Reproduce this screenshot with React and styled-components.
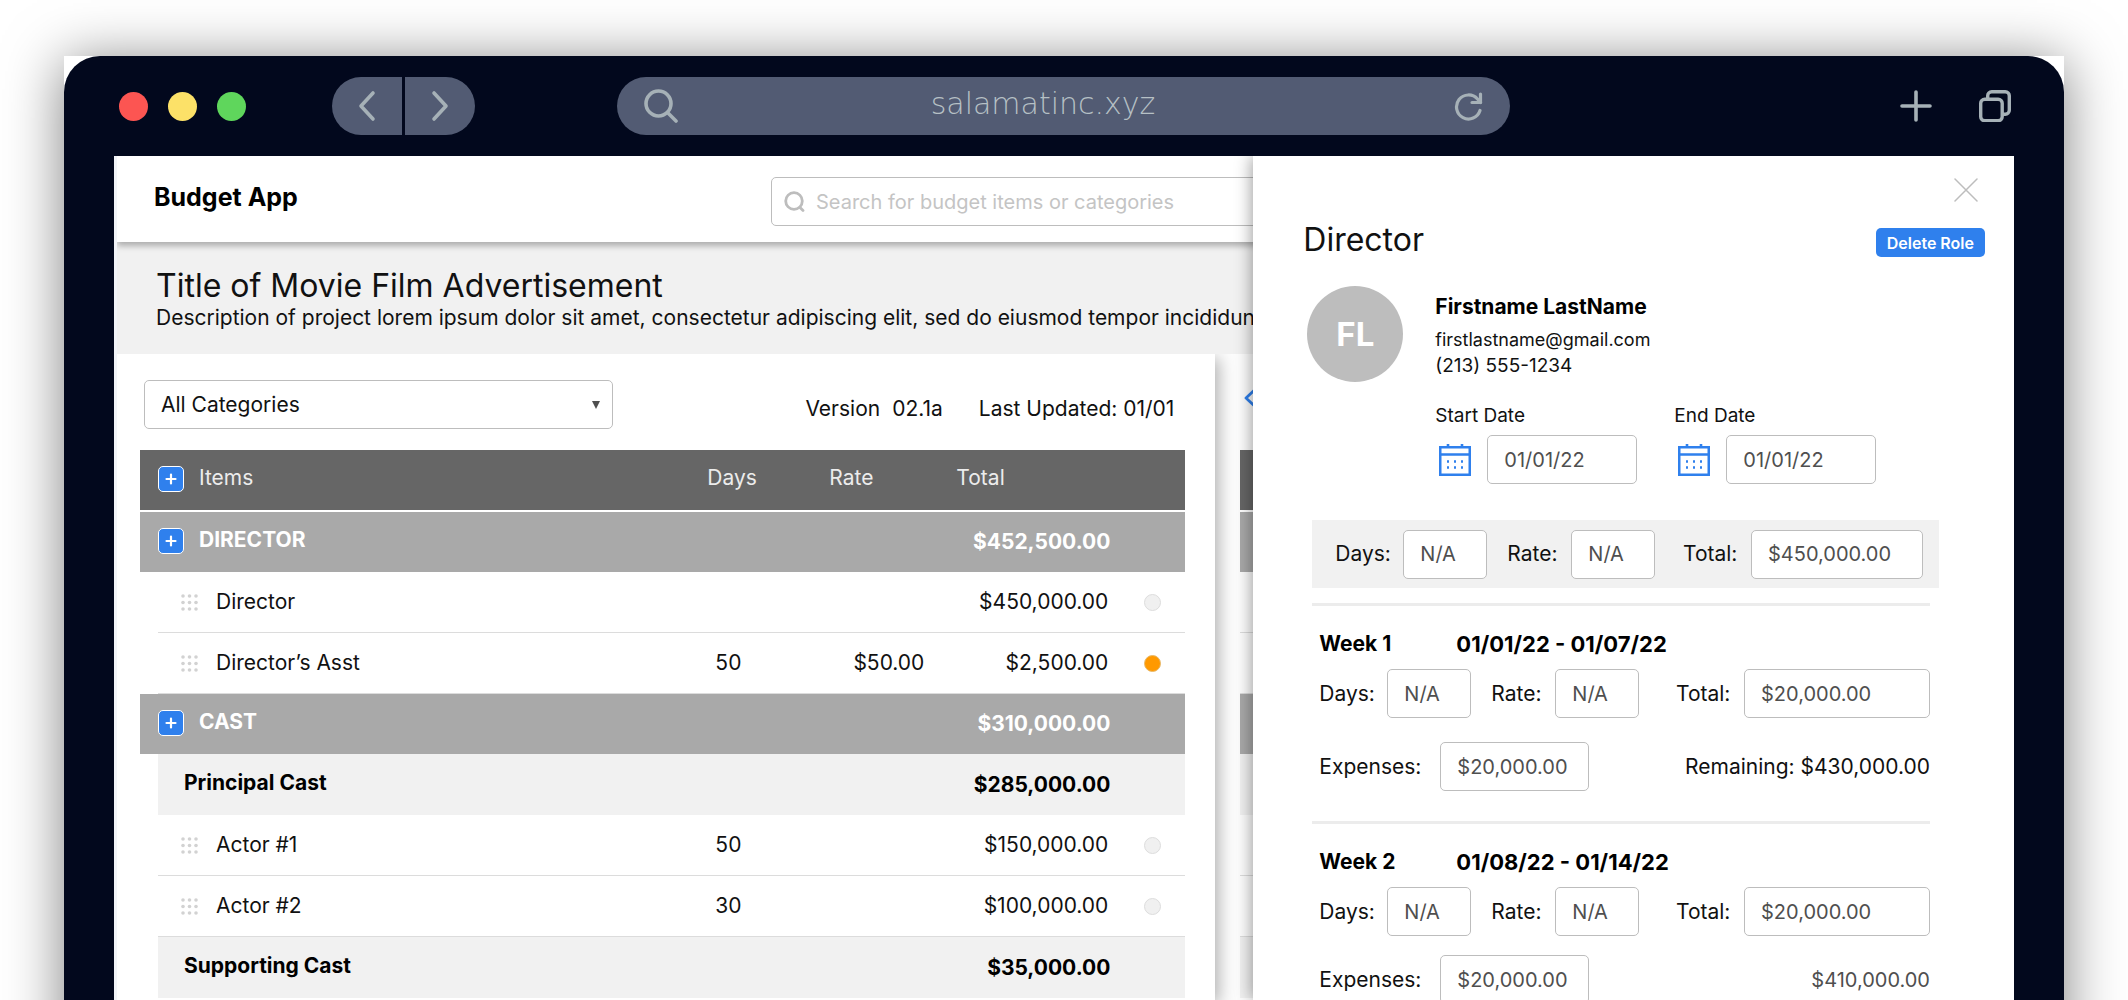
import React from "react";
import styled, { createGlobalStyle, css } from "styled-components";

const color = {
  frame: "#02081d",
  pill: "#525b73",
  chromeIcon: "#a6b1b7",
  blue: "#2f80ed",
  panel: "#f1f1f1",
  line: "#dcdcdc",
  control: "#bdbdbd",
  group: "#a9a9a9",
  head: "#666666",
  muted: "#4f4f4f",
};

const GlobalStyle = createGlobalStyle`
  *, *::before, *::after { box-sizing: border-box; }
  body {
    margin: 0;
    background: #fff;
    color: #111;
    font-family: Inter, "Liberation Sans", sans-serif;
    font-size: 21px;
    line-height: 28px;
  }
  h1, h2, h3, p { margin: 0; }
  button, input, select { font: inherit; color: inherit; margin: 0; }
  button { padding: 0; border: 0; background: none; cursor: pointer; }
  svg { display: block; flex: none; }
`;

const Page = styled.div`
  height: 100vh;
  padding: 56px 64px 0;
  overflow: hidden;
`;

const WindowShadow = styled.div`
  min-height: calc(100% + 80px);
  background: #fff;
  box-shadow: 0 6px 54px rgba(0, 0, 0, 0.5);
`;

const BrowserWindow = styled.div`
  height: calc(100vh - 56px);
  display: flex;
  flex-direction: column;
  padding: 0 50px;
  background: ${color.frame};
  border-radius: 36px 36px 0 0;
`;

/* Browser chrome */

const Chrome = styled.div`
  flex: none;
  height: 100px;
  display: flex;
  align-items: center;
  padding: 0 3px 0 5px;
  color: ${color.chromeIcon};
`;

const Lights = styled.div`
  display: flex;
  gap: 20px;
  margin-right: 86px;
`;

const Light = styled.span`
  width: 29px;
  height: 29px;
  border-radius: 50%;
  background: ${(p) => p.$tone};
`;

const History = styled.nav`
  display: flex;
  gap: 3px;
  margin-right: 142px;
`;

const HistoryButton = styled.button`
  width: 70px;
  height: 58px;
  display: grid;
  place-items: center;
  background: ${color.pill};
  border-radius: ${(p) => (p.$side === "left" ? "29px 0 0 29px" : "0 29px 29px 0")};
`;

const AddressBar = styled.div`
  flex: 0 1 893px;
  min-width: 0;
  height: 58px;
  display: flex;
  align-items: center;
  padding: 0 27px;
  background: ${color.pill};
  border-radius: 29px;
`;

const AddressInput = styled.input`
  flex: 1;
  min-width: 0;
  height: 58px;
  padding: 0 46px 6px 0;
  border: 0;
  outline: 0;
  background: none;
  color: #b6c0c5;
  text-align: center;
  font-family: "DejaVu Sans", sans-serif;
  font-size: 30px;
  font-weight: 200;
`;

const ChromeActions = styled.div`
  display: flex;
  gap: 47px;
  margin-left: auto;
`;

/* Application */

const AppShell = styled.div`
  position: relative;
  flex: 1;
  min-height: 0;
  display: flex;
  flex-direction: column;
  overflow: hidden;
  background: #fff;
  border-left: 3px solid #f2f4f8;
`;

const Header = styled.header`
  position: relative;
  z-index: 1;
  flex: none;
  height: 86px;
  display: grid;
  grid-template-columns: 1fr minmax(0, 590px) 1fr;
  align-items: start;
  padding: 21px 36px 0 37px;
  background: #fff;
  box-shadow: 0 4px 6px rgba(0, 0, 0, 0.28);
`;

const Brand = styled.h1`
  font-size: 25px;
  font-weight: 700;
  line-height: 40px;
  color: #000;
`;

const SearchBox = styled.label`
  height: 49px;
  display: flex;
  align-items: center;
  gap: 11px;
  padding: 0 12px;
  border: 1px solid ${color.control};
  border-radius: 5px;
`;

const SearchInput = styled.input`
  flex: 1;
  min-width: 0;
  padding: 0;
  border: 0;
  outline: 0;
  background: none;
  font-size: 20px;
  &::placeholder {
    color: #c4c4c4;
    opacity: 1;
  }
`;

const Hero = styled.section`
  flex: none;
  padding: 26px 39px 22px;
  background: ${color.panel};
  white-space: nowrap;
`;

const HeroTitle = styled.h2`
  font-size: 32px;
  font-weight: 400;
  line-height: 36px;
`;

const Workspace = styled.main`
  flex: 1;
  min-height: 0;
  display: flex;
`;

const BudgetPane = styled.section`
  position: relative;
  flex: 0 0 57.9%;
  padding: 26px 30px 0 23px;
  background: #fff;
  box-shadow: 4px 4px 16px rgba(0, 0, 0, 0.3);
  clip-path: inset(0 -40px 0 0);
`;

const NextPane = styled.section`
  flex: 1;
  padding: 26px 25px 0;
  background: #fdfdfd;
`;

const Toolbar = styled.div`
  height: 70px;
  display: flex;
  justify-content: space-between;
  align-items: flex-start;
  padding: 0 11px 0 4px;
`;

const PagerButton = styled.button`
  height: 36px;
  color: ${color.blue};
`;

const SelectBox = styled.div`
  width: 469px;
  display: grid;
  align-items: center;
  > * {
    grid-area: 1 / 1;
  }
  > svg {
    justify-self: end;
    margin-right: 13px;
    pointer-events: none;
  }
`;

const Select = styled.select`
  width: 100%;
  height: 49px;
  padding: 0 16px;
  appearance: none;
  background: #fff;
  border: 1px solid ${color.control};
  border-radius: 5px;
`;

const Meta = styled.div`
  display: flex;
  padding-top: 15px;
`;

const MetaText = styled.span`
  margin-left: ${(p) => (p.$group ? "36px" : "12px")};
`;

const Table = styled.table`
  width: 100%;
  table-layout: fixed;
  border-collapse: separate;
  border-spacing: 0;
`;

const Col = styled.col`
  width: ${(p) => p.$width};
`;

const rowStyles = {
  head: css`
    height: 62px;
    background: ${color.head};
    color: #ececec;
    border-bottom: 2px solid #fff;
  `,
  group: css`
    height: 60px;
    background: ${color.group};
    color: #fff;
    font-weight: 700;
  `,
  subtotal: css`
    height: 61px;
    background: ${color.panel};
    color: #000;
    font-weight: 700;
  `,
  item: css`
    height: 61px;
    border-bottom: 1px solid ${color.line};
  `,
};

const Row = styled.tr`
  > th,
  > td {
    padding: 0;
    text-align: left;
    font-weight: 400;
    ${(p) => rowStyles[p.$kind]}
  }
`;

const Indent = styled.td`
  &&& {
    background: none;
    border: 0;
  }
`;

const NameCell = styled.div`
  display: flex;
  align-items: center;
  padding-left: ${(p) => ({ item: "23px", subtotal: "26px" })[p.$kind] || "18px"};
  padding-bottom: ${(p) => (p.$kind === "item" ? "0" : "2px")};
  gap: ${(p) => (p.$kind === "item" ? "18px" : "15px")};
`;

const NameText = styled.span`
  padding-bottom: ${(p) => (p.$raised ? "2px" : "0")};
`;

const HeadText = styled.div`
  padding-bottom: 4px;
`;

const Amount = styled.div`
  text-align: right;
  padding-right: ${(p) => p.$inset};
`;

const DaysValue = styled.div`
  padding-left: 8px;
`;

const Status = styled.span`
  display: block;
  width: 17px;
  height: 17px;
  margin-left: 34px;
  border-radius: 50%;
  border: 1px solid ${(p) => (p.$flagged ? "#e8b96a" : "#dddddd")};
  background: ${(p) => (p.$flagged ? "#ff9900" : "#f0f0f0")};
`;

const AddButton = styled.button`
  width: 26px;
  height: 26px;
  display: grid;
  place-items: center;
  color: #fff;
  background: ${color.blue};
  border: 1px solid #fff;
  border-radius: 5px;
`;

const Band = styled.div`
  ${(p) => rowStyles[p.$kind]}
`;

/* Drawer */

const Drawer = styled.aside`
  position: absolute;
  z-index: 2;
  inset: 0 0 0 auto;
  width: 40.1%;
  padding: 22px 29px 0 50px;
  overflow: hidden;
  background: #fff;
  box-shadow: -1px 0 16px rgba(0, 0, 0, 0.4);
`;

const CloseButton = styled.button`
  display: block;
  margin: 0 7px 21px auto;
  color: ${color.control};
`;

const DrawerHead = styled.div`
  display: flex;
  justify-content: space-between;
  align-items: flex-end;
`;

const RoleTitle = styled.h2`
  font-size: 32px;
  font-weight: 400;
  line-height: 34px;
`;

const DeleteButton = styled.button`
  height: 29px;
  padding: 0 11px;
  color: #fff;
  font-size: 16px;
  font-weight: 600;
  line-height: 28px;
  background: ${color.blue};
  border-radius: 5px;
`;

const Profile = styled.section`
  display: flex;
  gap: 32px;
  padding: 29px 0 0 4px;
`;

const Avatar = styled.div`
  flex: none;
  width: 96px;
  height: 96px;
  display: grid;
  place-items: center;
  color: #fff;
  font-size: 33px;
  font-weight: 700;
  background: #bdbdbd;
  border-radius: 50%;
`;

const Details = styled.div`
  padding-top: 7px;
`;

const PersonName = styled.h3`
  margin-bottom: 6px;
  color: #000;
  font-size: 21px;
  font-weight: 700;
`;

const Contact = styled.p`
  font-size: ${(p) => p.$size};
  line-height: 26px;
`;

const Dates = styled.div`
  display: flex;
  gap: 37px;
  padding-top: 25px;
`;

const DateLabel = styled.label`
  display: block;
  margin-bottom: 7px;
  font-size: 19px;
  line-height: 24px;
`;

const DateControl = styled.div`
  display: flex;
  align-items: center;
  gap: 16px;
  padding-left: 4px;
  color: ${color.blue};
`;

const TextInput = styled.input`
  width: ${(p) => p.$width};
  height: 49px;
  padding: 0 0 0 16px;
  color: ${color.muted};
  font-size: 20px;
  background: #fff;
  border: 1px solid ${color.control};
  border-radius: 5px;
  outline: 0;
`;

const Summary = styled.section`
  display: flex;
  align-items: center;
  gap: 20px;
  height: 68px;
  margin: 36px 46px 15px 9px;
  padding: 0 16px 0 23px;
  background: ${color.panel};
`;

const Week = styled.section`
  margin: 0 55px 0 9px;
  padding: 24px 0 30px 7px;
  border-top: 3px solid #ececec;
`;

const WeekHeading = styled.h3`
  display: flex;
  margin-bottom: 11px;
  color: #000;
  font-size: 21px;
  font-weight: 700;
`;

const WeekName = styled.span`
  min-width: 137px;
`;

const WeekDates = styled.span`
  font-size: 22px;
`;

const FieldRow = styled.div`
  display: flex;
  align-items: center;
  gap: 20px;
  margin-top: ${(p) => p.$gap || "0"};
`;

const Field = styled.div`
  display: flex;
  align-items: center;
  margin-left: ${(p) => (p.$end ? "auto" : "0")};
`;

const FieldLabel = styled.label`
  min-width: ${(p) => p.$width};
`;

const Remaining = styled.p`
  margin-left: auto;
  color: ${(p) => (p.$muted ? color.muted : "inherit")};
  font-size: ${(p) => (p.$muted ? "20px" : "21px")};
`;

/* Icons */

const stroke = { fill: "none", stroke: "currentColor", strokeLinecap: "round", strokeLinejoin: "round" };

const ChevronIcon = ({ flip }) => (
  <svg width="20" height="32" viewBox="0 0 20 32" {...stroke} strokeWidth="3.6">
    <path d={flip ? "M4 3l12 13L4 29" : "M16 3L4 16l12 13"} />
  </svg>
);

const SearchIcon = ({ size, width }) => (
  <svg width={size} height={size} viewBox="0 0 34 34" {...stroke} strokeWidth={width}>
    <circle cx="14.5" cy="14.5" r="12.5" />
    <path d="M23.5 23.5l8.5 8.5" />
  </svg>
);

const SmallSearchIcon = () => (
  <svg width="21" height="21" viewBox="0 0 21 21" {...stroke} stroke="#bdbdbd" strokeWidth="2.8">
    <circle cx="10" cy="10" r="8.3" />
    <path d="M16 16.5l3 3" />
  </svg>
);

const ReloadIcon = () => (
  <svg width="29" height="29" viewBox="0 0 29 29" {...stroke} strokeWidth="3.2">
    <path d="M26.5 2v8.5h-8.500" />
    <path d="M26 18.5A12 12 0 1 1 23.5 7l3 3.500" />
  </svg>
);

const PlusIcon = () => (
  <svg width="32" height="32" viewBox="0 0 32 32" {...stroke} strokeWidth="3.6">
    <path d="M16 2v28M2 16h28" />
  </svg>
);

const TabsIcon = () => (
  <svg width="32" height="32" viewBox="0 0 32 32" {...stroke} strokeWidth="3.4">
    <rect x="1.7" y="9.2" width="21.5" height="21.5" rx="4" />
    <path d="M8.7 8.5V5.700a4 4 0 0 1 4-4h13.600a4 4 0 0 1 4 4v14.500a4 4 0 0 1-4 4h-2.500" />
  </svg>
);

const SmallPlusIcon = () => (
  <svg width="12" height="12" viewBox="0 0 12 12" {...stroke} strokeWidth="2.2">
    <path d="M6 1.500v9M1.500 6h9" />
  </svg>
);

const CaretIcon = () => (
  <svg width="8" height="8" viewBox="0 0 8 8" fill="#4f4f4f">
    <path d="M0 0h8L4 8z" />
  </svg>
);

const GripIcon = () => (
  <svg width="17" height="17" viewBox="0 0 17 17" fill="#d2d2d2">
    {[2, 8.5, 15].flatMap((y) => [2, 8.5, 15].map((x) => <circle key={`${x}-${y}`} cx={x} cy={y} r="1.8" />))}
  </svg>
);

const PagerIcon = () => (
  <svg width="14" height="18" viewBox="0 0 14 18" {...stroke} strokeWidth="2.8">
    <path d="M10 1.500L2 9l8 7.500" />
  </svg>
);

const CloseIcon = () => (
  <svg width="24" height="24" viewBox="0 0 24 24" {...stroke} strokeWidth="1.5">
    <path d="M1 1l22 22M23 1L1 23" />
  </svg>
);

const CalendarIcon = () => (
  <svg width="32" height="32" viewBox="0 0 32 32" {...stroke} strokeLinecap="butt" strokeLinejoin="miter" strokeWidth="2.6">
    <path d="M1.200 3.200h29.600v27.600H1.200zM1.200 10.500h29.600M9 0v4M23 0v4" />
    {[9, 16, 23].map((x) => (
      <path key={x} d={`M${x - 1} 17.500h2M${x - 1} 23.500h2`} />
    ))}
  </svg>
);

/* Data */

const rows = [
  { kind: "group", name: "DIRECTOR", total: "$452,500.00" },
  { kind: "item", name: "Director", total: "$450,000.00" },
  { kind: "item", name: "Director’s Asst", days: "50", rate: "$50.00", total: "$2,500.00", flagged: true },
  { kind: "group", name: "CAST", total: "$310,000.00" },
  { kind: "subtotal", name: "Principal Cast", total: "$285,000.00" },
  { kind: "item", name: "Actor #1", days: "50", total: "$150,000.00" },
  { kind: "item", name: "Actor #2", days: "30", total: "$100,000.00" },
  { kind: "subtotal", name: "Supporting Cast", total: "$35,000.00" },
];

const weeks = [
  { id: "w1", name: "Week 1", dates: "01/01/22 - 01/07/22", remaining: "Remaining: $430,000.00", gap: "24px" },
  { id: "w2", name: "Week 2", dates: "01/08/22 - 01/14/22", remaining: "$410,000.00", gap: "19px", muted: true },
];

const BudgetRow = ({ kind, name, days, rate, total, flagged }) => {
  const isItem = kind === "item";
  const isGroup = kind === "group";
  return (
    <Row $kind={kind}>
      {!isGroup && <Indent />}
      <td colSpan={isGroup ? 2 : 1}>
        <NameCell $kind={kind}>
          {isGroup && (
            <AddButton aria-label={`Add to ${name}`}>
              <SmallPlusIcon />
            </AddButton>
          )}
          {isItem && <GripIcon />}
          <NameText $raised={!isItem}>{name}</NameText>
        </NameCell>
      </td>
      <td>{days && <DaysValue>{days}</DaysValue>}</td>
      <td>{rate && <Amount $inset="32px">{rate}</Amount>}</td>
      <td>
        <Amount $inset={isItem ? "2px" : "0"}>{total}</Amount>
      </td>
      <td>{isItem && <Status $flagged={flagged} />}</td>
    </Row>
  );
};

const LabeledInput = ({ id, label, labelWidth, width, value, end }) => (
  <Field $end={end}>
    <FieldLabel htmlFor={id} $width={labelWidth}>
      {label}
    </FieldLabel>
    <TextInput id={id} $width={width} defaultValue={value} />
  </Field>
);

const CostFields = ({ id, total, totalWidth }) => (
  <>
    <LabeledInput id={`${id}-days`} label="Days:" labelWidth="68px" width="84px" value="N/A" />
    <LabeledInput id={`${id}-rate`} label="Rate:" labelWidth="64px" width="84px" value="N/A" />
    <LabeledInput id={`${id}-total`} label="Total:" labelWidth="68px" width={totalWidth} value={total} end />
  </>
);

const DateField = ({ id, label }) => (
  <div>
    <DateLabel htmlFor={id}>{label}</DateLabel>
    <DateControl>
      <CalendarIcon />
      <TextInput id={id} $width="150px" defaultValue="01/01/22" />
    </DateControl>
  </div>
);

const RoleDrawer = () => (
  <Drawer>
    <CloseButton aria-label="Close">
      <CloseIcon />
    </CloseButton>
    <DrawerHead>
      <RoleTitle>Director</RoleTitle>
      <DeleteButton>Delete Role</DeleteButton>
    </DrawerHead>
    <Profile>
      <Avatar>FL</Avatar>
      <Details>
        <PersonName>Firstname LastName</PersonName>
        <Contact $size="18px">firstlastname@gmail.com</Contact>
        <Contact $size="19px">(213) 555-1234</Contact>
        <Dates>
          <DateField id="start" label="Start Date" />
          <DateField id="end" label="End Date" />
        </Dates>
      </Details>
    </Profile>
    <Summary>
      <CostFields id="sum" total="$450,000.00" totalWidth="172px" />
    </Summary>
    {weeks.map((w) => (
      <Week key={w.id}>
        <WeekHeading>
          <WeekName>{w.name}</WeekName>
          <WeekDates>{w.dates}</WeekDates>
        </WeekHeading>
        <FieldRow>
          <CostFields id={w.id} total="$20,000.00" totalWidth="186px" />
        </FieldRow>
        <FieldRow $gap={w.gap}>
          <LabeledInput id={`${w.id}-exp`} label="Expenses:" labelWidth="121px" width="149px" value="$20,000.00" />
          <Remaining $muted={w.muted}>{w.remaining}</Remaining>
        </FieldRow>
      </Week>
    ))}
  </Drawer>
);

export default function App() {
  return (
    <Page>
      <GlobalStyle />
      <WindowShadow>
        <BrowserWindow>
          <Chrome>
            <Lights>
              <Light $tone="#fc5552" />
              <Light $tone="#fce168" />
              <Light $tone="#5fd65c" />
            </Lights>
            <History>
              <HistoryButton $side="left" aria-label="Back">
                <ChevronIcon />
              </HistoryButton>
              <HistoryButton $side="right" aria-label="Forward">
                <ChevronIcon flip />
              </HistoryButton>
            </History>
            <AddressBar>
              <SearchIcon size={34} width={3.6} />
              <AddressInput aria-label="Address" defaultValue="salamatinc.xyz" />
              <button aria-label="Reload">
                <ReloadIcon />
              </button>
            </AddressBar>
            <ChromeActions>
              <button aria-label="New tab">
                <PlusIcon />
              </button>
              <button aria-label="Show tabs">
                <TabsIcon />
              </button>
            </ChromeActions>
          </Chrome>
          <AppShell>
            <Header>
              <Brand>Budget App</Brand>
              <SearchBox>
                <SmallSearchIcon />
                <SearchInput aria-label="Search" placeholder="Search for budget items or categories" />
              </SearchBox>
            </Header>
            <Hero>
              <HeroTitle>Title of Movie Film Advertisement</HeroTitle>
              <p>
                Description of project lorem ipsum dolor sit amet, consectetur adipiscing elit, sed do eiusmod tempor
                incididunt
              </p>
            </Hero>
            <Workspace>
              <BudgetPane>
                <Toolbar>
                  <SelectBox>
                    <Select aria-label="Category" defaultValue="all">
                      <option value="all">All Categories</option>
                      <option value="director">Director</option>
                      <option value="cast">Cast</option>
                    </Select>
                    <CaretIcon />
                  </SelectBox>
                  <Meta>
                    <span>Version</span>
                    <MetaText>02.1a</MetaText>
                    <MetaText $group>Last Updated: 01/01</MetaText>
                  </Meta>
                </Toolbar>
                <Table>
                  <colgroup>
                    <Col $width="18px" />
                    <Col $width="auto" />
                    <Col $width="122px" />
                    <Col $width="127px" />
                    <Col $width="154px" />
                    <Col $width="75px" />
                  </colgroup>
                  <thead>
                    <Row $kind="head">
                      <th colSpan={2}>
                        <NameCell $kind="head">
                          <AddButton aria-label="Add category">
                            <SmallPlusIcon />
                          </AddButton>
                          <NameText $raised>Items</NameText>
                        </NameCell>
                      </th>
                      <th>
                        <HeadText>Days</HeadText>
                      </th>
                      <th>
                        <HeadText>Rate</HeadText>
                      </th>
                      <th>
                        <HeadText>Total</HeadText>
                      </th>
                      <th />
                    </Row>
                  </thead>
                  <tbody>
                    {rows.map((row) => (
                      <BudgetRow key={row.name} {...row} />
                    ))}
                  </tbody>
                </Table>
              </BudgetPane>
              <NextPane>
                <Toolbar>
                  <PagerButton aria-label="Previous">
                    <PagerIcon />
                  </PagerButton>
                </Toolbar>
                <Band $kind="head" />
                {rows.map((row) => (
                  <Band key={row.name} $kind={row.kind} />
                ))}
              </NextPane>
            </Workspace>
            <RoleDrawer />
          </AppShell>
        </BrowserWindow>
      </WindowShadow>
    </Page>
  );
}
